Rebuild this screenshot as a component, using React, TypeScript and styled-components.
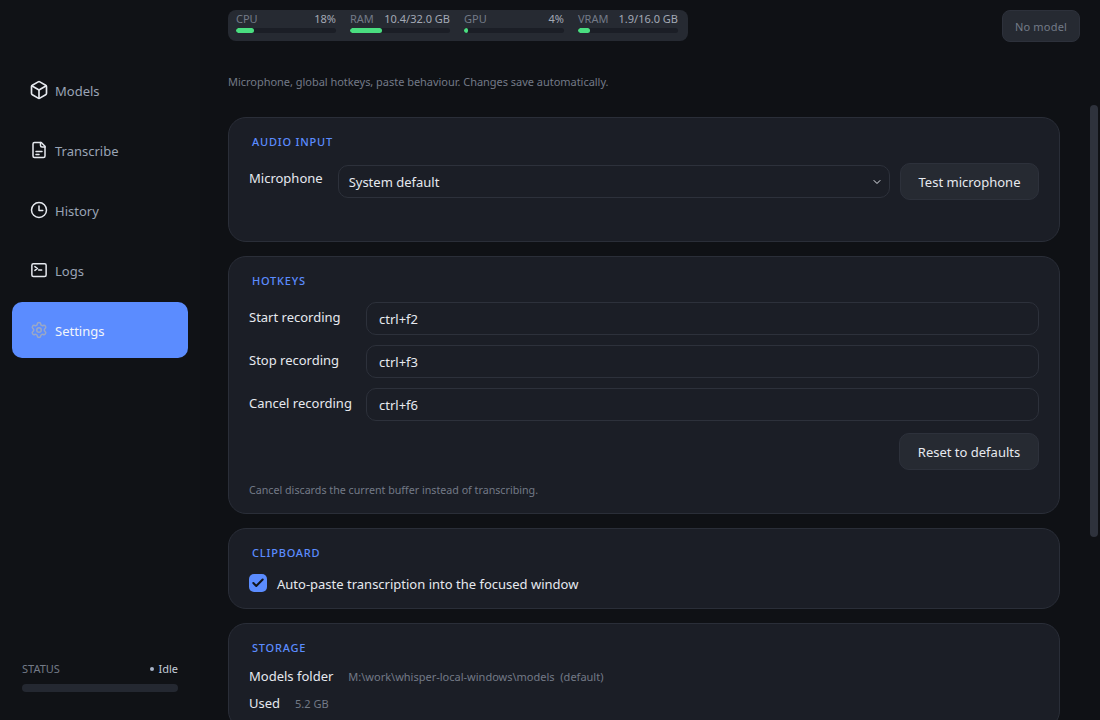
import { FunctionComponent, ReactNode } from 'react';
import styled, { createGlobalStyle } from 'styled-components';
import { Box, Check, ChevronDown, Settings } from 'lucide-react';

interface Metric {
  name: string;
  value: string;
  percent: number;
}

const metrics: Metric[] = [
  { name: 'CPU', value: '18%', percent: 18 },
  { name: 'RAM', value: '10.4/32.0 GB', percent: 32 },
  { name: 'GPU', value: '4%', percent: 4 },
  { name: 'VRAM', value: '1.9/16.0 GB', percent: 11.9 },
];

const NavSvg: FunctionComponent<{ children: ReactNode }> = ({ children }) => (
  <svg width="18" height="18" viewBox="0 0 24 24" fill="none" stroke="currentColor" strokeWidth="2" strokeLinecap="round" strokeLinejoin="round">
    {children}
  </svg>
);

const DocIcon: FunctionComponent = () => (
  <NavSvg>
    <path d="M15 2H6a2 2 0 0 0-2 2v16a2 2 0 0 0 2 2h12a2 2 0 0 0 2-2V7z" />
    <path d="M14 2v4a2 2 0 0 0 2 2h4" />
    <path d="M8 14h8" />
    <path d="M8 18h4" />
  </NavSvg>
);

const ClockIcon: FunctionComponent = () => (
  <NavSvg>
    <circle cx="12" cy="12" r="10" />
    <path d="M12 6.5v6h5" />
  </NavSvg>
);

const TerminalIcon: FunctionComponent = () => (
  <NavSvg>
    <rect x="2.5" y="3.5" width="19" height="17" rx="2" />
    <path d="M6.5 7.5l3.5 2.5-3.5 2.5" />
    <path d="M11.5 12h4" />
  </NavSvg>
);

const navItems = [
  { label: 'Models', icon: <Box size={20} /> },
  { label: 'Transcribe', icon: <DocIcon /> },
  { label: 'History', icon: <ClockIcon /> },
  { label: 'Logs', icon: <TerminalIcon /> },
  { label: 'Settings', icon: <Settings size={18} />, active: true },
];

const hotkeys = [
  { label: 'Start recording', value: 'ctrl+f2' },
  { label: 'Stop recording', value: 'ctrl+f3' },
  { label: 'Cancel recording', value: 'ctrl+f6' },
];

const Section: FunctionComponent<{ title: string; children: ReactNode }> = ({ title, children }) => (
  <Card>
    <CardTitle>{title}</CardTitle>
    {children}
  </Card>
);

const App: FunctionComponent = () => (
  <Shell>
    <GlobalStyle />
    <Sidebar>
      <Nav>
        {navItems.map((item) => (
          <NavItem key={item.label} $active={item.active}>
            <NavIcon $active={item.active}>{item.icon}</NavIcon>
            <NavText>{item.label}</NavText>
          </NavItem>
        ))}
      </Nav>
      <Status>
        <StatusRow>
          <StatusLabel>STATUS</StatusLabel>
          <StatusValue>
            <StatusDot />
            Idle
          </StatusValue>
        </StatusRow>
        <StatusBar />
      </Status>
    </Sidebar>
    <Main>
      <TopBar>
        <MetricsPanel>
          {metrics.map((metric) => (
            <MetricBlock key={metric.name}>
              <MetricHead>
                <MetricName>{metric.name}</MetricName>
                <MetricValue>{metric.value}</MetricValue>
              </MetricHead>
              <MetricTrack>
                <MetricFill style={{ width: `${metric.percent}%` }} />
              </MetricTrack>
            </MetricBlock>
          ))}
        </MetricsPanel>
        <ModelBadge>No model</ModelBadge>
      </TopBar>
      <Content>
        <Subtitle>Microphone, global hotkeys, paste behaviour. Changes save automatically.</Subtitle>
        <Section title="AUDIO INPUT">
          <MicRow>
            <FieldLabel>Microphone</FieldLabel>
            <SelectBox>
              System default
              <ChevronDown size={12} strokeWidth={2} />
            </SelectBox>
            <Button>Test microphone</Button>
          </MicRow>
        </Section>
        <Section title="HOTKEYS">
          <HotkeyList>
            {hotkeys.map((hotkey) => (
              <HotkeyRow key={hotkey.label}>
                <HotkeyLabel>{hotkey.label}</HotkeyLabel>
                <TextInput readOnly value={hotkey.value} />
              </HotkeyRow>
            ))}
          </HotkeyList>
          <ButtonRow>
            <Button $width={140}>Reset to defaults</Button>
          </ButtonRow>
          <Hint>Cancel discards the current buffer instead of transcribing.</Hint>
        </Section>
        <Section title="CLIPBOARD">
          <CheckRow>
            <CheckBox>
              <Check size={14} strokeWidth={3.5} />
            </CheckBox>
            <CheckText>Auto-paste transcription into the focused window</CheckText>
          </CheckRow>
        </Section>
        <Section title="STORAGE">
          <StorageList>
            <StorageRow>
              <StorageLabel>Models folder</StorageLabel>
              <StorageValue>M:\work\whisper-local-windows\models&nbsp; (default)</StorageValue>
            </StorageRow>
            <StorageRow>
              <StorageLabel>Used</StorageLabel>
              <StorageValue>5.2 GB</StorageValue>
            </StorageRow>
          </StorageList>
        </Section>
      </Content>
      <ScrollThumb />
    </Main>
  </Shell>
);

const GlobalStyle = createGlobalStyle`
  html, body {
    margin: 0;
    height: 100%;
    overflow: hidden;
    background: #0f1115;
  }
  body {
    font-family: "Noto Sans", Inter, "Liberation Sans", sans-serif;
  }
`;

const Shell = styled.div`
  display: flex;
  height: 720px;
  overflow: hidden;
  color: #e6e9ef;
`;

const Sidebar = styled.aside`
  width: 200px;
  flex: none;
  box-sizing: border-box;
  padding: 62px 12px 28px;
  display: flex;
  flex-direction: column;
  justify-content: space-between;
  background: #101216;
`;

const Nav = styled.nav`
  display: flex;
  flex-direction: column;
  gap: 4px;
`;

const NavItem = styled.div<{ $active?: boolean }>`
  height: 56px;
  box-sizing: border-box;
  padding-left: 18px;
  display: flex;
  align-items: center;
  gap: 7px;
  border-radius: 10px;
  font-size: 13px;
  color: ${(p) => (p.$active ? '#f2f5fb' : '#9aa4b5')};
  background: ${(p) => (p.$active ? '#5b8cff' : 'transparent')};
`;

const NavIcon = styled.span<{ $active?: boolean }>`
  width: 18px;
  height: 18px;
  display: flex;
  align-items: center;
  justify-content: center;
  color: ${(p) => (p.$active ? '#9aa8c6' : '#e6e9ef')};

  svg {
    flex: none;
  }
`;

const NavText = styled.span`
  margin-top: 2px;
`;

const Status = styled.div`
  padding: 0 10px;
`;

const StatusRow = styled.div`
  display: flex;
  justify-content: space-between;
  align-items: center;
  margin-bottom: 8px;
`;

const StatusLabel = styled.span`
  font-size: 11px;
  color: #737a87;
`;

const StatusValue = styled.span`
  display: flex;
  align-items: center;
  gap: 4px;
  font-size: 11px;
  color: #c4ccd9;
`;

const StatusDot = styled.span`
  width: 4px;
  height: 4px;
  border-radius: 50%;
  background: #a8b4c8;
`;

const StatusBar = styled.div`
  height: 8px;
  border-radius: 4px;
  background: #242831;
`;

const Main = styled.main`
  position: relative;
  flex: 1;
  min-width: 0;
  display: flex;
  flex-direction: column;
`;

const TopBar = styled.header`
  display: flex;
  justify-content: space-between;
  align-items: flex-start;
  padding: 10px 20px 0 28px;
`;

const MetricsPanel = styled.div`
  width: 460px;
  height: 31px;
  box-sizing: border-box;
  padding: 0 10px 0 8px;
  display: flex;
  gap: 14px;
  border-radius: 8px;
  background: #262a32;
`;

const MetricBlock = styled.div`
  width: 100px;
`;

const MetricHead = styled.div`
  height: 17px;
  margin-bottom: 1px;
  display: flex;
  justify-content: space-between;
  align-items: center;
  font-size: 11px;
`;

const MetricName = styled.span`
  color: #737a87;
`;

const MetricValue = styled.span`
  color: #a3a9b5;
`;

const MetricTrack = styled.div`
  height: 5px;
  border-radius: 3px;
  background: #1b1e26;
  overflow: hidden;
`;

const MetricFill = styled.div`
  height: 100%;
  border-radius: 3px;
  background: #4ade80;
`;

const ModelBadge = styled.div`
  width: 78px;
  height: 32px;
  box-sizing: border-box;
  display: flex;
  align-items: center;
  justify-content: center;
  border: 1px solid #2d313b;
  border-radius: 8px;
  background: #262a32;
  font-size: 11px;
  letter-spacing: 0.2px;
  color: #737a87;
`;

const Content = styled.div`
  flex: 1;
  overflow: hidden;
  padding: 33px 40px 0 28px;
  display: flex;
  flex-direction: column;
  gap: 14px;
`;

const Subtitle = styled.p`
  margin: 0 0 14px;
  font-size: 11px;
  line-height: 14px;
  letter-spacing: -0.03px;
  color: #737a87;
`;

const Card = styled.section`
  flex: none;
  box-sizing: border-box;
  padding: 17px 20px 15px;
  border: 1px solid #2a2e38;
  border-radius: 18px;
  background: #1b1e26;
`;

const CardTitle = styled.h2`
  margin: 0 0 14px;
  padding-left: 3px;
  font-size: 11px;
  line-height: 14px;
  font-weight: 500;
  letter-spacing: 0.8px;
  color: #5b8cff;
`;

const MicRow = styled.div`
  display: flex;
  align-items: flex-start;
  gap: 10px;
  padding-bottom: 26px;
`;

const FieldLabel = styled.span`
  flex: none;
  font-size: 13px;
  line-height: 30px;
  white-space: nowrap;
`;

const SelectBox = styled.div`
  flex: 1;
  height: 33px;
  margin: 2px 0 0 5px;
  box-sizing: border-box;
  padding: 0 6px 0 10px;
  display: flex;
  align-items: center;
  justify-content: space-between;
  border: 1px solid #2d313b;
  border-radius: 10px;
  background: #1b1e26;
  font-size: 13px;
`;

const Button = styled.button<{ $width?: number }>`
  width: ${(p) => p.$width ?? 139}px;
  height: 37px;
  padding: 0;
  border: 1px solid #2d313b;
  border-radius: 10px;
  background: #262a32;
  color: #e6e9ef;
  font: inherit;
  font-size: 13px;
`;

const HotkeyList = styled.div`
  display: flex;
  flex-direction: column;
  gap: 10px;
  margin-top: 10px;
`;

const HotkeyRow = styled.div`
  display: flex;
  align-items: flex-start;
  gap: 16px;
`;

const HotkeyLabel = styled(FieldLabel)`
  width: 101px;
`;

const TextInput = styled.input`
  flex: 1;
  height: 33px;
  box-sizing: border-box;
  padding: 0 12px;
  border: 1px solid #2d313b;
  border-radius: 10px;
  background: #1b1e26;
  color: #e6e9ef;
  font: inherit;
  font-size: 13px;
  outline: none;
`;

const ButtonRow = styled.div`
  display: flex;
  justify-content: flex-end;
  margin-top: 12px;
`;

const Hint = styled.p`
  margin: 13px 0 1px;
  font-size: 10.7px;
  line-height: 14px;
  color: #737a87;
`;

const CheckRow = styled.label`
  height: 19px;
  display: flex;
  align-items: flex-start;
  gap: 10px;
  font-size: 13px;
`;

const CheckText = styled.span`
  line-height: 20px;
`;

const CheckBox = styled.span`
  width: 18px;
  height: 18px;
  display: flex;
  align-items: center;
  justify-content: center;
  border-radius: 5px;
  background: #5b8cff;
  color: #12151c;
`;

const StorageList = styled.div`
  display: flex;
  flex-direction: column;
  gap: 7px;
  margin-top: -3px;
`;

const StorageRow = styled.div`
  display: flex;
  align-items: center;
  gap: 15px;
  height: 20px;
`;

const StorageLabel = styled.span`
  font-size: 13px;
`;

const StorageValue = styled.span`
  font-size: 11px;
  color: #737a87;
`;

const ScrollThumb = styled.div`
  position: absolute;
  top: 105px;
  right: 2px;
  width: 8px;
  height: 432px;
  border-radius: 4px;
  background: #2e323c;
`;

export default App;
